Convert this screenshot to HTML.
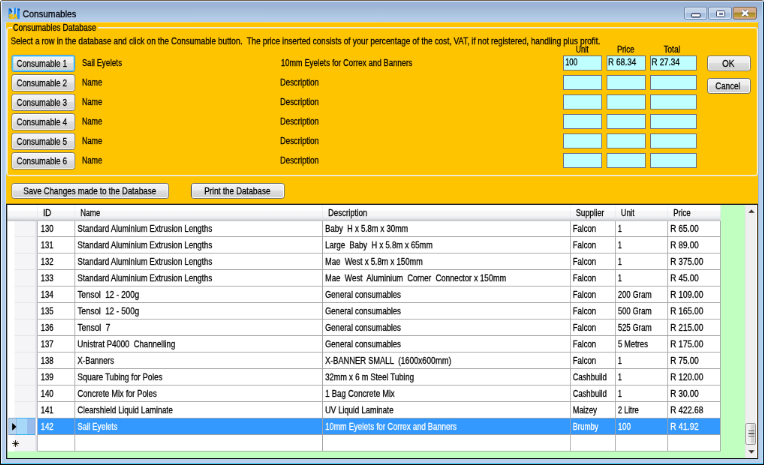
<!DOCTYPE html><html><head><meta charset="utf-8"><title>Consumables</title><style>
html,body{margin:0;padding:0;background:#fff;overflow:hidden;}
body{width:764px;height:465px;position:relative;}
#win{will-change:transform;position:absolute;left:0;top:0;width:1019px;height:620px;transform:translate(0.2px,0) scale(0.7505,0.75);transform-origin:0 0;
  font:12px "Liberation Sans", sans-serif;color:#000;overflow:hidden;}
#win div{position:absolute;box-sizing:border-box;}
#root{position:absolute;left:0;top:0;width:764px;height:465px;overflow:hidden;background:#fff;}
#ov{position:absolute;left:0;top:0;width:764px;height:465px;overflow:hidden;}
#ov i{position:absolute;display:block;}
#frame{left:0;top:0;width:1019px;height:620px;border-radius:3px 3px 0 0;
  background:linear-gradient(#9cb4d6 0px,#9cb4d6 8px,#a6bcda 12px,#a9c3dd 18px,#b4cce8 24px,#b4cce8 29px,#b5cdea 30px,#b6cfec 100%);}
.t{white-space:pre;line-height:14px;height:14px;transform-origin:0 0;-webkit-text-stroke:0.26px currentColor;}
.btn{border:1px solid #707070;border-radius:3.5px;background:linear-gradient(#f3f3f3 0,#ececec 46%,#dedede 50%,#d0d0d0 100%);
  box-shadow:inset 0 0 0 1px rgba(255,255,255,.9);}
.btn.focus{border-color:#3a8ad8;box-shadow:inset 0 0 0 1.4px #5ad0fa;}
.fld{border:1px solid #6a6a82;background:#c0ffff;}
.hc{background:linear-gradient(#ffffff 0,#ffffff 38%,#f7f7f8 42%,#f5f5f7 75%,#e6e8ec 90%,#d6d8de 100%);border-bottom:1px solid #c2c2c6;}
.hs{background:linear-gradient(#f4f5f7,#e2e4e8);}
.rh{background:#fff;border-right:1px solid #b8b8c0;}
.rh i{position:absolute;left:10px;top:0;right:0;bottom:0;background:#f5f5f7;border-right:2.5px solid #dcdce4;border-bottom:1px solid #e6e6e8;}
.c{background:#fff;border-right:1px solid #a4a4a6;border-bottom:1px solid #a4a4a6;}
.c.sel{background:#3399ff;}
</style></head><body><div id="root"><div id="win">
<div id="frame"></div>
<svg style="position:absolute;left:10.5px;top:9.7px" width="16" height="16" viewBox="0 0 16 16" font-family='"Liberation Sans", sans-serif'>
<rect x="0" y="1" width="3.4" height="13.4" fill="#2a90f8"/>
<rect x="3.4" y="1" width="2" height="8" fill="#7cc0f8"/>
<rect x="5.2" y="0.8" width="2" height="8" fill="#c4e0f6"/>
<rect x="7" y="0.4" width="3" height="14" fill="#2a90f8"/>
<rect x="10" y="0.8" width="1.2" height="13" fill="#c4dcf2"/>
<rect x="11.2" y="0.8" width="3.6" height="14.4" fill="#2a90f8"/>
<path d="M1.6 2.2 L4.8 6.2" stroke="#1a2a4a" stroke-width="1.4"/>
<circle cx="14" cy="3" r="0.9" fill="#1a2a4a"/>
<text x="0.6" y="15" font-size="9.4" font-weight="bold" fill="#ffd000" stroke="#f0b000" stroke-width="0.9" paint-order="stroke" textLength="11.4" lengthAdjust="spacingAndGlyphs">SA</text>
</svg>
<div class="t" style="left:29.98px;top:11.73px;transform:scaleX(0.9278) skewX(.02deg);font-size:12.6px;line-height:15px;height:15px;color:#000008;-webkit-text-stroke:0.3px currentColor;">Consumables</div>
<div style="left:911px;top:9px;width:31px;height:17px;border:1px solid #5a789e;border-radius:3px;background:linear-gradient(#c6d6ea 0,#c2d3e8 46%,#a8c0e0 50%,#adc4e2 85%,#c0e0f8 100%);box-shadow:inset 0 0 0 1px rgba(255,255,255,.7)"><div style="left:9px;top:8px;width:11.5px;height:5px;background:#fbfbf6;border:1px solid #3a4068;border-radius:1.5px;box-shadow:0 0 0 0.4px #3a4068"></div></div>
<div style="left:943px;top:9px;width:32px;height:17px;border:1px solid #5a789e;border-radius:3px;background:linear-gradient(#c6d6ea 0,#c2d3e8 46%,#a8c0e0 50%,#adc4e2 85%,#c0e0f8 100%);box-shadow:inset 0 0 0 1px rgba(255,255,255,.7)"><div style="left:10px;top:3.5px;width:11.5px;height:9.5px;background:#f4f6fa;border:1.5px solid #3a4068;border-radius:1.5px"></div><div style="left:13.5px;top:6.5px;width:5px;height:3.5px;background:#6a7aa0;"></div></div>
<div style="left:976px;top:9px;width:32px;height:17px;border:1px solid #6e5640;border-radius:3px;background:linear-gradient(#d8cc9c 0,#d6ac8e 14%,#d4aa8c 42%,#b89830 45%,#8e7c28 54%,#b89830 62%,#bc9c34 84%,#d8aa88 86%,#d8aa88 100%);box-shadow:inset 0 0 0 1px rgba(216,170,140,.9)"><svg style="position:absolute;left:8.9px;top:1.7px" width="13" height="11" viewBox="-6.5 -5.5 13 11"><path d="M-3.7 -3.2 L3.7 3.2 M3.7 -3.2 L-3.7 3.2" stroke="#46507a" stroke-width="4.3" stroke-linecap="butt"/><path d="M-3.9 -3.4 L3.9 3.4 M3.9 -3.4 L-3.9 3.4" stroke="#fff" stroke-width="2.7" stroke-linecap="butt"/></svg></div>
<div style="left:8px;top:30px;width:1003px;height:582px;background:#ffc400"></div>
<div style="left:8px;top:36px;width:1002px;height:199px;border:1px solid #e4ebf4;border-radius:4px;box-shadow:inset 0 0 0 1px rgba(255,255,255,.7)"></div>
<div style="left:16px;top:30px;width:114px;height:13px;background:#ffc400"></div>
<div class="t" style="left:16.92px;top:30.18px;transform:scaleX(0.8639) skewX(.02deg);">Consumables Database</div>
<div class="t" style="left:14.12px;top:48.04px;transform:scaleX(0.8852) skewX(.02deg);">Select a row in the database and click on the Consumable button.  The price inserted consists of your percentage of the cost, VAT, if not registered, handling plus profit.</div>
<div class="t" style="left:766.56px;top:58.58px;transform:scaleX(0.7954) skewX(.02deg);">Unit</div>
<div class="t" style="left:822.39px;top:58.58px;transform:scaleX(0.8401) skewX(.02deg);">Price</div>
<div class="t" style="left:883.81px;top:58.58px;transform:scaleX(0.8709) skewX(.02deg);">Total</div>
<div class="btn focus" style="left:15px;top:73px;width:85px;height:23px;"></div>
<div class="t" style="left:21.99px;top:77.91px;transform:scaleX(0.8668) skewX(.02deg);">Consumable 1</div>
<div class="t" style="left:108.86px;top:76.71px;transform:scaleX(0.8490) skewX(.02deg);">Sail Eyelets</div>
<div class="t" style="left:373.62px;top:76.71px;transform:scaleX(0.8587) skewX(.02deg);">10mm Eyelets for Correx and Banners</div>
<div class="fld" style="left:750px;top:74px;width:52px;height:20px;"></div>
<div class="fld" style="left:808px;top:74px;width:52px;height:20px;"></div>
<div class="fld" style="left:866px;top:74px;width:62px;height:20px;"></div>
<div class="btn" style="left:15px;top:99px;width:85px;height:23px;"></div>
<div class="t" style="left:21.99px;top:103.91px;transform:scaleX(0.8668) skewX(.02deg);">Consumable 2</div>
<div class="t" style="left:109.26px;top:102.71px;transform:scaleX(0.8338) skewX(.02deg);">Name</div>
<div class="t" style="left:373.35px;top:102.71px;transform:scaleX(0.8583) skewX(.02deg);">Description</div>
<div class="fld" style="left:750px;top:100px;width:52px;height:20px;"></div>
<div class="fld" style="left:808px;top:100px;width:52px;height:20px;"></div>
<div class="fld" style="left:866px;top:100px;width:62px;height:20px;"></div>
<div class="btn" style="left:15px;top:125px;width:85px;height:23px;"></div>
<div class="t" style="left:21.99px;top:129.91px;transform:scaleX(0.8668) skewX(.02deg);">Consumable 3</div>
<div class="t" style="left:109.26px;top:128.71px;transform:scaleX(0.8338) skewX(.02deg);">Name</div>
<div class="t" style="left:373.35px;top:128.71px;transform:scaleX(0.8583) skewX(.02deg);">Description</div>
<div class="fld" style="left:750px;top:126px;width:52px;height:20px;"></div>
<div class="fld" style="left:808px;top:126px;width:52px;height:20px;"></div>
<div class="fld" style="left:866px;top:126px;width:62px;height:20px;"></div>
<div class="btn" style="left:15px;top:151px;width:85px;height:23px;"></div>
<div class="t" style="left:21.99px;top:155.91px;transform:scaleX(0.8668) skewX(.02deg);">Consumable 4</div>
<div class="t" style="left:109.26px;top:154.71px;transform:scaleX(0.8338) skewX(.02deg);">Name</div>
<div class="t" style="left:373.35px;top:154.71px;transform:scaleX(0.8583) skewX(.02deg);">Description</div>
<div class="fld" style="left:750px;top:152px;width:52px;height:20px;"></div>
<div class="fld" style="left:808px;top:152px;width:52px;height:20px;"></div>
<div class="fld" style="left:866px;top:152px;width:62px;height:20px;"></div>
<div class="btn" style="left:15px;top:177px;width:85px;height:23px;"></div>
<div class="t" style="left:21.99px;top:181.91px;transform:scaleX(0.8668) skewX(.02deg);">Consumable 5</div>
<div class="t" style="left:109.26px;top:180.71px;transform:scaleX(0.8338) skewX(.02deg);">Name</div>
<div class="t" style="left:373.35px;top:180.71px;transform:scaleX(0.8583) skewX(.02deg);">Description</div>
<div class="fld" style="left:750px;top:178px;width:52px;height:20px;"></div>
<div class="fld" style="left:808px;top:178px;width:52px;height:20px;"></div>
<div class="fld" style="left:866px;top:178px;width:62px;height:20px;"></div>
<div class="btn" style="left:15px;top:203px;width:85px;height:23px;"></div>
<div class="t" style="left:21.99px;top:207.91px;transform:scaleX(0.8668) skewX(.02deg);">Consumable 6</div>
<div class="t" style="left:109.26px;top:206.71px;transform:scaleX(0.8338) skewX(.02deg);">Name</div>
<div class="t" style="left:373.35px;top:206.71px;transform:scaleX(0.8583) skewX(.02deg);">Description</div>
<div class="fld" style="left:750px;top:204px;width:52px;height:20px;"></div>
<div class="fld" style="left:808px;top:204px;width:52px;height:20px;"></div>
<div class="fld" style="left:866px;top:204px;width:62px;height:20px;"></div>
<div class="t" style="left:752.83px;top:75.64px;transform:scaleX(0.8012) skewX(.02deg);">100</div>
<div class="t" style="left:809.86px;top:75.64px;transform:scaleX(0.8886) skewX(.02deg);">R 68.34</div>
<div class="t" style="left:867.69px;top:75.64px;transform:scaleX(0.8886) skewX(.02deg);">R 27.34</div>
<div class="btn" style="left:942px;top:74px;width:58px;height:21px;"></div>
<div class="t" style="left:961.76px;top:77.78px;transform:scaleX(0.9413) skewX(.02deg);">OK</div>
<div class="btn" style="left:942px;top:104px;width:58px;height:21px;"></div>
<div class="t" style="left:952.96px;top:107.91px;transform:scaleX(0.8822) skewX(.02deg);">Cancel</div>
<div class="btn" style="left:15px;top:244px;width:210px;height:21px;"></div>
<div class="t" style="left:30.65px;top:247.51px;transform:scaleX(0.8824) skewX(.02deg);">Save Changes made to the Database</div>
<div class="btn" style="left:254px;top:244px;width:125px;height:21px;"></div>
<div class="t" style="left:271.55px;top:247.51px;transform:scaleX(0.8839) skewX(.02deg);">Print the Database</div>
<div style="left:8px;top:272px;width:1003px;height:340px;background:#c0ffc0;border:1px solid #1c2024;border-right-color:#4e4030"></div>
<div style="left:9px;top:273px;width:951px;height:329px;background:#fff"></div>
<div class="hc" style="left:9px;top:273px;width:951px;height:21px;"></div>
<div class="hs" style="left:49px;top:273px;width:1px;height:20px;"></div>
<div class="hs" style="left:99px;top:273px;width:1px;height:20px;"></div>
<div class="hs" style="left:429px;top:273px;width:1px;height:20px;"></div>
<div class="hs" style="left:759px;top:273px;width:1px;height:20px;"></div>
<div class="hs" style="left:819px;top:273px;width:1px;height:20px;"></div>
<div class="hs" style="left:889px;top:273px;width:1px;height:20px;"></div>
<div class="hs" style="left:959px;top:273px;width:1px;height:20px;"></div>
<div class="t" style="left:56.63px;top:277.11px;transform:scaleX(0.9161) skewX(.02deg);">ID</div>
<div class="t" style="left:107.26px;top:277.11px;transform:scaleX(0.8213) skewX(.02deg);">Name</div>
<div class="t" style="left:436.91px;top:277.11px;transform:scaleX(0.8672) skewX(.02deg);">Description</div>
<div class="t" style="left:766.96px;top:277.11px;transform:scaleX(0.8577) skewX(.02deg);">Supplier</div>
<div class="t" style="left:826.78px;top:277.11px;transform:scaleX(0.8515) skewX(.02deg);">Unit</div>
<div class="t" style="left:897.14px;top:277.11px;transform:scaleX(0.8401) skewX(.02deg);">Price</div>
<div class="rh" style="left:9px;top:294px;width:41px;height:22px;"><i></i></div>
<div class="c" style="left:50px;top:294px;width:50px;height:22px;"></div>
<div class="t" style="left:53.56px;top:297.78px;transform:scaleX(0.8477) skewX(.02deg);">130</div>
<div class="c" style="left:100px;top:294px;width:330px;height:22px;"></div>
<div class="t" style="left:102.73px;top:297.78px;transform:scaleX(0.8675) skewX(.02deg);">Standard Aluminium Extrusion Lengths</div>
<div class="c" style="left:430px;top:294px;width:330px;height:22px;"></div>
<div class="t" style="left:432.91px;top:297.78px;transform:scaleX(0.8622) skewX(.02deg);">Baby  H x 5.8m x 30mm</div>
<div class="c" style="left:760px;top:294px;width:60px;height:22px;"></div>
<div class="t" style="left:762.82px;top:297.78px;transform:scaleX(0.8642) skewX(.02deg);">Falcon</div>
<div class="c" style="left:820px;top:294px;width:70px;height:22px;"></div>
<div class="t" style="left:823.18px;top:297.78px;transform:scaleX(0.7800) skewX(.02deg);">1</div>
<div class="c" style="left:890px;top:294px;width:70px;height:22px;"></div>
<div class="t" style="left:893.14px;top:297.78px;transform:scaleX(0.8950) skewX(.02deg);">R 65.00</div>
<div class="rh" style="left:9px;top:316px;width:41px;height:22px;"><i></i></div>
<div class="c" style="left:50px;top:316px;width:50px;height:22px;"></div>
<div class="t" style="left:53.56px;top:319.78px;transform:scaleX(0.8477) skewX(.02deg);">131</div>
<div class="c" style="left:100px;top:316px;width:330px;height:22px;"></div>
<div class="t" style="left:102.73px;top:319.78px;transform:scaleX(0.8675) skewX(.02deg);">Standard Aluminium Extrusion Lengths</div>
<div class="c" style="left:430px;top:316px;width:330px;height:22px;"></div>
<div class="t" style="left:432.91px;top:319.78px;transform:scaleX(0.8655) skewX(.02deg);">Large  Baby  H x 5.8m x 65mm</div>
<div class="c" style="left:760px;top:316px;width:60px;height:22px;"></div>
<div class="t" style="left:762.82px;top:319.78px;transform:scaleX(0.8642) skewX(.02deg);">Falcon</div>
<div class="c" style="left:820px;top:316px;width:70px;height:22px;"></div>
<div class="t" style="left:823.18px;top:319.78px;transform:scaleX(0.7800) skewX(.02deg);">1</div>
<div class="c" style="left:890px;top:316px;width:70px;height:22px;"></div>
<div class="t" style="left:893.14px;top:319.78px;transform:scaleX(0.8950) skewX(.02deg);">R 89.00</div>
<div class="rh" style="left:9px;top:338px;width:41px;height:22px;"><i></i></div>
<div class="c" style="left:50px;top:338px;width:50px;height:22px;"></div>
<div class="t" style="left:53.56px;top:341.78px;transform:scaleX(0.8477) skewX(.02deg);">132</div>
<div class="c" style="left:100px;top:338px;width:330px;height:22px;"></div>
<div class="t" style="left:102.73px;top:341.78px;transform:scaleX(0.8675) skewX(.02deg);">Standard Aluminium Extrusion Lengths</div>
<div class="c" style="left:430px;top:338px;width:330px;height:22px;"></div>
<div class="t" style="left:432.91px;top:341.78px;transform:scaleX(0.8705) skewX(.02deg);">Mae  West x 5.8m x 150mm</div>
<div class="c" style="left:760px;top:338px;width:60px;height:22px;"></div>
<div class="t" style="left:762.82px;top:341.78px;transform:scaleX(0.8642) skewX(.02deg);">Falcon</div>
<div class="c" style="left:820px;top:338px;width:70px;height:22px;"></div>
<div class="t" style="left:823.18px;top:341.78px;transform:scaleX(0.7800) skewX(.02deg);">1</div>
<div class="c" style="left:890px;top:338px;width:70px;height:22px;"></div>
<div class="t" style="left:893.14px;top:341.78px;transform:scaleX(0.8957) skewX(.02deg);">R 375.00</div>
<div class="rh" style="left:9px;top:360px;width:41px;height:22px;"><i></i></div>
<div class="c" style="left:50px;top:360px;width:50px;height:22px;"></div>
<div class="t" style="left:53.56px;top:363.78px;transform:scaleX(0.8477) skewX(.02deg);">133</div>
<div class="c" style="left:100px;top:360px;width:330px;height:22px;"></div>
<div class="t" style="left:102.73px;top:363.78px;transform:scaleX(0.8675) skewX(.02deg);">Standard Aluminium Extrusion Lengths</div>
<div class="c" style="left:430px;top:360px;width:330px;height:22px;"></div>
<div class="t" style="left:432.91px;top:363.78px;transform:scaleX(0.8698) skewX(.02deg);">Mae  West  Aluminium  Corner  Connector x 150mm</div>
<div class="c" style="left:760px;top:360px;width:60px;height:22px;"></div>
<div class="t" style="left:762.82px;top:363.78px;transform:scaleX(0.8642) skewX(.02deg);">Falcon</div>
<div class="c" style="left:820px;top:360px;width:70px;height:22px;"></div>
<div class="t" style="left:823.18px;top:363.78px;transform:scaleX(0.7800) skewX(.02deg);">1</div>
<div class="c" style="left:890px;top:360px;width:70px;height:22px;"></div>
<div class="t" style="left:893.14px;top:363.78px;transform:scaleX(0.8950) skewX(.02deg);">R 45.00</div>
<div class="rh" style="left:9px;top:382px;width:41px;height:22px;"><i></i></div>
<div class="c" style="left:50px;top:382px;width:50px;height:22px;"></div>
<div class="t" style="left:53.56px;top:385.78px;transform:scaleX(0.8477) skewX(.02deg);">134</div>
<div class="c" style="left:100px;top:382px;width:330px;height:22px;"></div>
<div class="t" style="left:102.73px;top:385.78px;transform:scaleX(0.8925) skewX(.02deg);">Tensol  12 - 200g</div>
<div class="c" style="left:430px;top:382px;width:330px;height:22px;"></div>
<div class="t" style="left:432.91px;top:385.78px;transform:scaleX(0.8656) skewX(.02deg);">General consumables</div>
<div class="c" style="left:760px;top:382px;width:60px;height:22px;"></div>
<div class="t" style="left:762.82px;top:385.78px;transform:scaleX(0.8642) skewX(.02deg);">Falcon</div>
<div class="c" style="left:820px;top:382px;width:70px;height:22px;"></div>
<div class="t" style="left:823.18px;top:385.78px;transform:scaleX(0.8431) skewX(.02deg);">200 Gram</div>
<div class="c" style="left:890px;top:382px;width:70px;height:22px;"></div>
<div class="t" style="left:893.14px;top:385.78px;transform:scaleX(0.8957) skewX(.02deg);">R 109.00</div>
<div class="rh" style="left:9px;top:404px;width:41px;height:22px;"><i></i></div>
<div class="c" style="left:50px;top:404px;width:50px;height:22px;"></div>
<div class="t" style="left:53.56px;top:407.78px;transform:scaleX(0.8477) skewX(.02deg);">135</div>
<div class="c" style="left:100px;top:404px;width:330px;height:22px;"></div>
<div class="t" style="left:102.73px;top:407.78px;transform:scaleX(0.8925) skewX(.02deg);">Tensol  12 - 500g</div>
<div class="c" style="left:430px;top:404px;width:330px;height:22px;"></div>
<div class="t" style="left:432.91px;top:407.78px;transform:scaleX(0.8656) skewX(.02deg);">General consumables</div>
<div class="c" style="left:760px;top:404px;width:60px;height:22px;"></div>
<div class="t" style="left:762.82px;top:407.78px;transform:scaleX(0.8642) skewX(.02deg);">Falcon</div>
<div class="c" style="left:820px;top:404px;width:70px;height:22px;"></div>
<div class="t" style="left:823.18px;top:407.78px;transform:scaleX(0.8431) skewX(.02deg);">500 Gram</div>
<div class="c" style="left:890px;top:404px;width:70px;height:22px;"></div>
<div class="t" style="left:893.14px;top:407.78px;transform:scaleX(0.8957) skewX(.02deg);">R 165.00</div>
<div class="rh" style="left:9px;top:426px;width:41px;height:22px;"><i></i></div>
<div class="c" style="left:50px;top:426px;width:50px;height:22px;"></div>
<div class="t" style="left:53.56px;top:429.78px;transform:scaleX(0.8477) skewX(.02deg);">136</div>
<div class="c" style="left:100px;top:426px;width:330px;height:22px;"></div>
<div class="t" style="left:102.73px;top:429.78px;transform:scaleX(0.9052) skewX(.02deg);">Tensol  7</div>
<div class="c" style="left:430px;top:426px;width:330px;height:22px;"></div>
<div class="t" style="left:432.91px;top:429.78px;transform:scaleX(0.8656) skewX(.02deg);">General consumables</div>
<div class="c" style="left:760px;top:426px;width:60px;height:22px;"></div>
<div class="t" style="left:762.82px;top:429.78px;transform:scaleX(0.8642) skewX(.02deg);">Falcon</div>
<div class="c" style="left:820px;top:426px;width:70px;height:22px;"></div>
<div class="t" style="left:823.18px;top:429.78px;transform:scaleX(0.8431) skewX(.02deg);">525 Gram</div>
<div class="c" style="left:890px;top:426px;width:70px;height:22px;"></div>
<div class="t" style="left:893.14px;top:429.78px;transform:scaleX(0.8957) skewX(.02deg);">R 215.00</div>
<div class="rh" style="left:9px;top:448px;width:41px;height:22px;"><i></i></div>
<div class="c" style="left:50px;top:448px;width:50px;height:22px;"></div>
<div class="t" style="left:53.56px;top:451.78px;transform:scaleX(0.8477) skewX(.02deg);">137</div>
<div class="c" style="left:100px;top:448px;width:330px;height:22px;"></div>
<div class="t" style="left:102.73px;top:451.78px;transform:scaleX(0.8714) skewX(.02deg);">Unistrat P4000  Channelling</div>
<div class="c" style="left:430px;top:448px;width:330px;height:22px;"></div>
<div class="t" style="left:432.91px;top:451.78px;transform:scaleX(0.8656) skewX(.02deg);">General consumables</div>
<div class="c" style="left:760px;top:448px;width:60px;height:22px;"></div>
<div class="t" style="left:762.82px;top:451.78px;transform:scaleX(0.8642) skewX(.02deg);">Falcon</div>
<div class="c" style="left:820px;top:448px;width:70px;height:22px;"></div>
<div class="t" style="left:823.18px;top:451.78px;transform:scaleX(0.8578) skewX(.02deg);">5 Metres</div>
<div class="c" style="left:890px;top:448px;width:70px;height:22px;"></div>
<div class="t" style="left:893.14px;top:451.78px;transform:scaleX(0.8957) skewX(.02deg);">R 175.00</div>
<div class="rh" style="left:9px;top:470px;width:41px;height:22px;"><i></i></div>
<div class="c" style="left:50px;top:470px;width:50px;height:22px;"></div>
<div class="t" style="left:53.56px;top:473.78px;transform:scaleX(0.8477) skewX(.02deg);">138</div>
<div class="c" style="left:100px;top:470px;width:330px;height:22px;"></div>
<div class="t" style="left:102.73px;top:473.78px;transform:scaleX(0.8566) skewX(.02deg);">X-Banners</div>
<div class="c" style="left:430px;top:470px;width:330px;height:22px;"></div>
<div class="t" style="left:432.91px;top:473.78px;transform:scaleX(0.8764) skewX(.02deg);">X-BANNER SMALL  (1600x600mm)</div>
<div class="c" style="left:760px;top:470px;width:60px;height:22px;"></div>
<div class="t" style="left:762.82px;top:473.78px;transform:scaleX(0.8642) skewX(.02deg);">Falcon</div>
<div class="c" style="left:820px;top:470px;width:70px;height:22px;"></div>
<div class="t" style="left:823.18px;top:473.78px;transform:scaleX(0.7800) skewX(.02deg);">1</div>
<div class="c" style="left:890px;top:470px;width:70px;height:22px;"></div>
<div class="t" style="left:893.14px;top:473.78px;transform:scaleX(0.8950) skewX(.02deg);">R 75.00</div>
<div class="rh" style="left:9px;top:492px;width:41px;height:22px;"><i></i></div>
<div class="c" style="left:50px;top:492px;width:50px;height:22px;"></div>
<div class="t" style="left:53.56px;top:495.78px;transform:scaleX(0.8477) skewX(.02deg);">139</div>
<div class="c" style="left:100px;top:492px;width:330px;height:22px;"></div>
<div class="t" style="left:102.73px;top:495.78px;transform:scaleX(0.8791) skewX(.02deg);">Square Tubing for Poles</div>
<div class="c" style="left:430px;top:492px;width:330px;height:22px;"></div>
<div class="t" style="left:432.91px;top:495.78px;transform:scaleX(0.8690) skewX(.02deg);">32mm x 6 m Steel Tubing</div>
<div class="c" style="left:760px;top:492px;width:60px;height:22px;"></div>
<div class="t" style="left:762.82px;top:495.78px;transform:scaleX(0.8481) skewX(.02deg);">Cashbuild</div>
<div class="c" style="left:820px;top:492px;width:70px;height:22px;"></div>
<div class="t" style="left:823.18px;top:495.78px;transform:scaleX(0.7800) skewX(.02deg);">1</div>
<div class="c" style="left:890px;top:492px;width:70px;height:22px;"></div>
<div class="t" style="left:893.14px;top:495.78px;transform:scaleX(0.8957) skewX(.02deg);">R 120.00</div>
<div class="rh" style="left:9px;top:514px;width:41px;height:22px;"><i></i></div>
<div class="c" style="left:50px;top:514px;width:50px;height:22px;"></div>
<div class="t" style="left:53.56px;top:517.78px;transform:scaleX(0.8477) skewX(.02deg);">140</div>
<div class="c" style="left:100px;top:514px;width:330px;height:22px;"></div>
<div class="t" style="left:102.73px;top:517.78px;transform:scaleX(0.8700) skewX(.02deg);">Concrete Mix for Poles</div>
<div class="c" style="left:430px;top:514px;width:330px;height:22px;"></div>
<div class="t" style="left:432.91px;top:517.78px;transform:scaleX(0.8783) skewX(.02deg);">1 Bag Concrete Mix</div>
<div class="c" style="left:760px;top:514px;width:60px;height:22px;"></div>
<div class="t" style="left:762.82px;top:517.78px;transform:scaleX(0.8481) skewX(.02deg);">Cashbuild</div>
<div class="c" style="left:820px;top:514px;width:70px;height:22px;"></div>
<div class="t" style="left:823.18px;top:517.78px;transform:scaleX(0.7800) skewX(.02deg);">1</div>
<div class="c" style="left:890px;top:514px;width:70px;height:22px;"></div>
<div class="t" style="left:893.14px;top:517.78px;transform:scaleX(0.8950) skewX(.02deg);">R 30.00</div>
<div class="rh" style="left:9px;top:536px;width:41px;height:22px;"><i></i></div>
<div class="c" style="left:50px;top:536px;width:50px;height:22px;"></div>
<div class="t" style="left:53.56px;top:539.78px;transform:scaleX(0.8477) skewX(.02deg);">141</div>
<div class="c" style="left:100px;top:536px;width:330px;height:22px;"></div>
<div class="t" style="left:102.73px;top:539.78px;transform:scaleX(0.8571) skewX(.02deg);">Clearshield Liquid Laminate</div>
<div class="c" style="left:430px;top:536px;width:330px;height:22px;"></div>
<div class="t" style="left:432.91px;top:539.78px;transform:scaleX(0.8693) skewX(.02deg);">UV Liquid Laminate</div>
<div class="c" style="left:760px;top:536px;width:60px;height:22px;"></div>
<div class="t" style="left:762.82px;top:539.78px;transform:scaleX(0.8459) skewX(.02deg);">Maizey</div>
<div class="c" style="left:820px;top:536px;width:70px;height:22px;"></div>
<div class="t" style="left:823.18px;top:539.78px;transform:scaleX(0.8328) skewX(.02deg);">2 Litre</div>
<div class="c" style="left:890px;top:536px;width:70px;height:22px;"></div>
<div class="t" style="left:893.14px;top:539.78px;transform:scaleX(0.8957) skewX(.02deg);">R 422.68</div>
<div class="rh" style="left:9px;top:558px;width:41px;height:22px;"><div style="left:2px;top:-1px;width:36px;height:23px;background:linear-gradient(90deg,#b4d4f0 0,#b4d4f0 26%,#9cbce4 27%,#9cbce4 29%,#a8d8f8 30%,#a8d8f8 71%,#98bcec 72%,#98bcec 100%);border:1px solid #7a9ccc;border-top-color:#86a4c8"></div><div style="left:12px;top:-1px;width:25px;height:1.3px;background:#34b2ea"></div><div style="left:12px;top:20.7px;width:25px;height:1.3px;background:#34b2ea"></div><svg style="position:absolute;left:6.6px;top:6.3px" width="6" height="10" viewBox="0 0 6 10"><path d="M0 0 L5.6 5 L0 10 Z" fill="#000"/></svg></div>
<div class="c sel" style="left:50px;top:558px;width:50px;height:22px;"></div>
<div class="t" style="left:53.56px;top:561.78px;transform:scaleX(0.8477) skewX(.02deg);color:#fff;">142</div>
<div class="c sel" style="left:100px;top:558px;width:330px;height:22px;"></div>
<div class="t" style="left:102.73px;top:561.78px;transform:scaleX(0.8490) skewX(.02deg);color:#fff;">Sail Eyelets</div>
<div class="c sel" style="left:430px;top:558px;width:330px;height:22px;"></div>
<div class="t" style="left:432.91px;top:561.78px;transform:scaleX(0.8587) skewX(.02deg);color:#fff;">10mm Eyelets for Correx and Banners</div>
<div class="c sel" style="left:760px;top:558px;width:60px;height:22px;"></div>
<div class="t" style="left:762.82px;top:561.78px;transform:scaleX(0.8235) skewX(.02deg);color:#fff;">Brumby</div>
<div class="c sel" style="left:820px;top:558px;width:70px;height:22px;"></div>
<div class="t" style="left:823.18px;top:561.78px;transform:scaleX(0.8610) skewX(.02deg);color:#fff;">100</div>
<div class="c sel" style="left:890px;top:558px;width:70px;height:22px;"></div>
<div class="t" style="left:893.14px;top:561.78px;transform:scaleX(0.8950) skewX(.02deg);color:#fff;">R 41.92</div>
<div class="rh" style="left:9px;top:580px;width:41px;height:22px;"><i></i><svg style="position:absolute;left:5.7px;top:5.8px" width="11" height="11" viewBox="-5.5 -5.5 11 11"><path d="M-4.6 0 H4.6 M0 -4.6 V4.6" stroke="#1a1208" stroke-width="1.1"/><path d="M-3.1 -3.1 L3.1 3.1 M3.1 -3.1 L-3.1 3.1" stroke="#1a1208" stroke-width="1.0"/></svg></div>
<div class="c" style="left:50px;top:580px;width:50px;height:22px;"></div>
<div class="c" style="left:100px;top:580px;width:330px;height:22px;"></div>
<div class="c" style="left:430px;top:580px;width:330px;height:22px;"></div>
<div class="c" style="left:760px;top:580px;width:60px;height:22px;"></div>
<div class="c" style="left:820px;top:580px;width:70px;height:22px;"></div>
<div class="c" style="left:890px;top:580px;width:70px;height:22px;"></div>
<div style="left:9px;top:294px;width:951px;height:1px;background:#d2d2d4"></div>
<div style="left:992px;top:273px;width:18px;height:338px;background:#efefef;border-left:1px solid #e2e2e8;border-right:1.4px solid #fff"></div>
<svg style="position:absolute;left:997.199px;top:279.133px" width="8" height="5" viewBox="0 0 8 5"><path d="M0 4.8 L4 0.2 L8 4.8 Z" fill="#3a3028"/></svg>
<svg style="position:absolute;left:997.199px;top:600.0px" width="8" height="5" viewBox="0 0 8 5"><path d="M0 0.2 L4 4.8 L8 0.2 Z" fill="#3a3028"/></svg>
<div style="left:992.805px;top:564.267px;width:14.533px;height:28.533px;border:1px solid #8c8c8c;border-radius:2.5px;background:linear-gradient(90deg,#f5f5f5 0,#ececec 45%,#d6d6d6 55%,#c6c6c6 100%);box-shadow:inset 0 0 0 1px rgba(255,255,255,.7)"><div style="left:3.4px;top:8.6px;width:7.6px;height:1.3px;background:#5e5e5e"></div><div style="left:3.4px;top:12.1px;width:7.6px;height:1.3px;background:#5e5e5e"></div><div style="left:3.4px;top:15.6px;width:7.6px;height:1.3px;background:#5e5e5e"></div></div>
</div><div id="ov"><i style="left:0px;top:2px;width:1px;height:463px;background:linear-gradient(#6a5a48 0,#3a3026 12px,#0c120e 26px,#0c120e 100%)"></i><i style="left:1px;top:2px;width:1px;height:462px;background:#e2efff"></i><i style="left:5px;top:22px;width:1px;height:437px;background:#c4def9"></i><i style="left:0px;top:1px;width:1px;height:1px;background:#b0a69c"></i><i style="left:1px;top:0px;width:1px;height:1px;background:#b0a69c"></i><i style="left:763px;top:2px;width:1px;height:463px;background:#1c3048"></i><i style="left:762px;top:2px;width:1px;height:462px;background:#aee0ff"></i><i style="left:763px;top:1px;width:1px;height:1px;background:#a0a8b4"></i><i style="left:762px;top:0px;width:1px;height:1px;background:#b0a69c"></i><i style="left:758px;top:22px;width:1px;height:437px;background:#a4b8d0"></i><i style="left:6px;top:22px;width:752px;height:1px;background:#f8d45a"></i><i style="left:2px;top:0px;width:760px;height:1px;background:#7a6a58"></i><i style="left:2px;top:1px;width:760px;height:1px;background:#c6daf5"></i><i style="left:0px;top:464px;width:764px;height:1px;background:#121412"></i><i style="left:1px;top:463px;width:762px;height:1px;background:#52c8f8"></i><i style="left:2px;top:462px;width:760px;height:1px;background:#c4cce4"></i><i style="left:6px;top:204px;width:1px;height:255px;background:#222622"></i><i style="left:7px;top:205px;width:1px;height:253px;background:rgba(60,60,60,.33)"></i><i style="left:6px;top:203px;width:752px;height:1px;background:rgba(30,34,38,.28)"></i><i style="left:757px;top:204px;width:1px;height:255px;background:#5e4a30"></i><i style="left:756px;top:205px;width:1px;height:253px;background:#fff"></i><i style="left:6px;top:204px;width:752px;height:1px;background:#1e2226"></i><i style="left:6px;top:458px;width:752px;height:1px;background:#1a1e1a"></i></div></div></body></html>
